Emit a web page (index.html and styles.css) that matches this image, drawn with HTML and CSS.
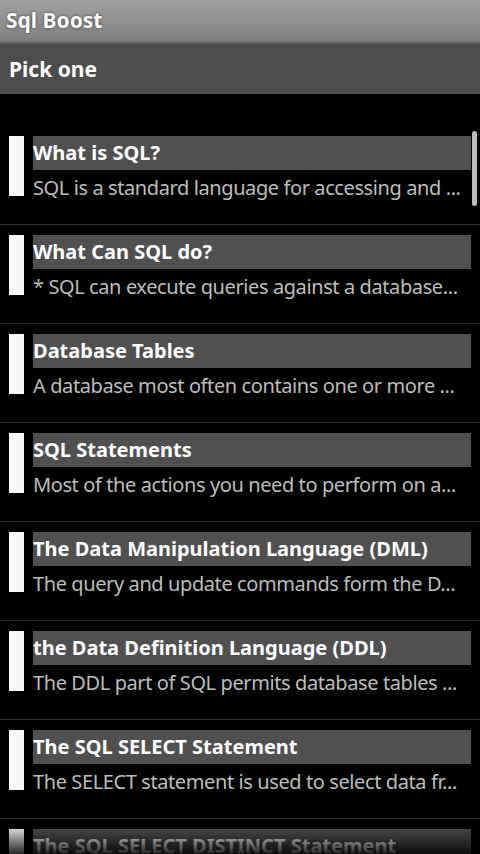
FILE: index.html
```html
<!DOCTYPE html>
<html>
<head>
<meta charset="utf-8">
<link rel="stylesheet" href="styles.css">
</head>
<body>
<div class="app">
  <header class="titlebar">Sql Boost</header>
  <div class="subheader">Pick one</div>
  <div class="list-wrap">
    <ul class="list">
      <li class="item"><span class="marker"></span><div class="texts"><div class="title">What is SQL?</div><div class="desc">SQL is a standard language for accessing and ...</div></div></li>
      <li class="item"><span class="marker"></span><div class="texts"><div class="title">What Can SQL do?</div><div class="desc">* SQL can execute queries against a database...</div></div></li>
      <li class="item"><span class="marker"></span><div class="texts"><div class="title">Database Tables</div><div class="desc">A database most often contains one or more ...</div></div></li>
      <li class="item"><span class="marker"></span><div class="texts"><div class="title">SQL Statements</div><div class="desc">Most of the actions you need to perform on a...</div></div></li>
      <li class="item"><span class="marker"></span><div class="texts"><div class="title">The Data Manipulation Language (DML)</div><div class="desc">The query and update commands form the D...</div></div></li>
      <li class="item"><span class="marker"></span><div class="texts"><div class="title">the Data Definition Language (DDL)</div><div class="desc">The DDL part of SQL permits database tables ...</div></div></li>
      <li class="item"><span class="marker"></span><div class="texts"><div class="title">The SQL SELECT Statement</div><div class="desc">The SELECT statement is used to select data fr...</div></div></li>
      <li class="item"><span class="marker"></span><div class="texts"><div class="title">The SQL SELECT DISTINCT Statement</div><div class="desc">In a table, some of the columns may contain ...</div></div></li>
    </ul>
    <div class="scrollbar"></div>
    <div class="fade"></div>
  </div>
</div>
</body>
</html>
```
FILE: styles.css
```css
* { box-sizing: border-box; }
html, body { margin: 0; padding: 0; background: #000; }
body {
  width: 480px;
  height: 854px;
  overflow: hidden;
  font-family: "Noto Sans", "Open Sans", "DejaVu Sans", sans-serif;
  color: #fff;
}
.app { display: flex; flex-direction: column; height: 854px; }
.titlebar {
  height: 44px;
  padding: 5px 0 0 6px;
  font-size: 21px;
  font-weight: 700;
  line-height: 30px;
  color: #fff;
  text-shadow: 0 0 3px rgba(0,0,0,0.6);
  background: linear-gradient(#a2a2a2, #7e7e7e);
  border-bottom: 2px solid #5e5e5e;
  flex: none;
}
.subheader {
  height: 50px;
  padding: 10px 0 0 9px;
  font-size: 21px;
  font-weight: 700;
  line-height: 30px;
  background: #4d4d4d;
  flex: none;
}
.list-wrap { position: relative; flex: 1; overflow: hidden; }
.list { list-style: none; margin: 0; padding: 31px 0 0 0; }
.item {
  display: flex;
  height: 99px;
  padding: 10px 9px 0 9px;
  border-top: 1px solid #333;
  gap: 9px;
}
.item:first-child { border-top-color: transparent; }
.marker {
  width: 15px;
  height: 60px;
  background: #f8f8f8;
  flex: none;
}
.texts { flex: 1; min-width: 0; }
.title {
  height: 34px;
  background: #505050;
  font-size: 20px;
  font-weight: 700;
  line-height: 34px;
  white-space: nowrap;
  color: #fff;
}
.desc {
  font-size: 20px;
  letter-spacing: -0.4px;
  line-height: 36px;
  color: #bdbdbd;
  white-space: nowrap;
}
.scrollbar {
  position: absolute;
  right: 3px;
  top: 37px;
  width: 5px;
  height: 75px;
  border-radius: 3px;
  background: #bbb;
}
.fade {
  position: absolute;
  left: 0;
  right: 0;
  bottom: 0;
  height: 30px;
  background: linear-gradient(rgba(0,0,0,0), rgba(0,0,0,0.85));
}
```
